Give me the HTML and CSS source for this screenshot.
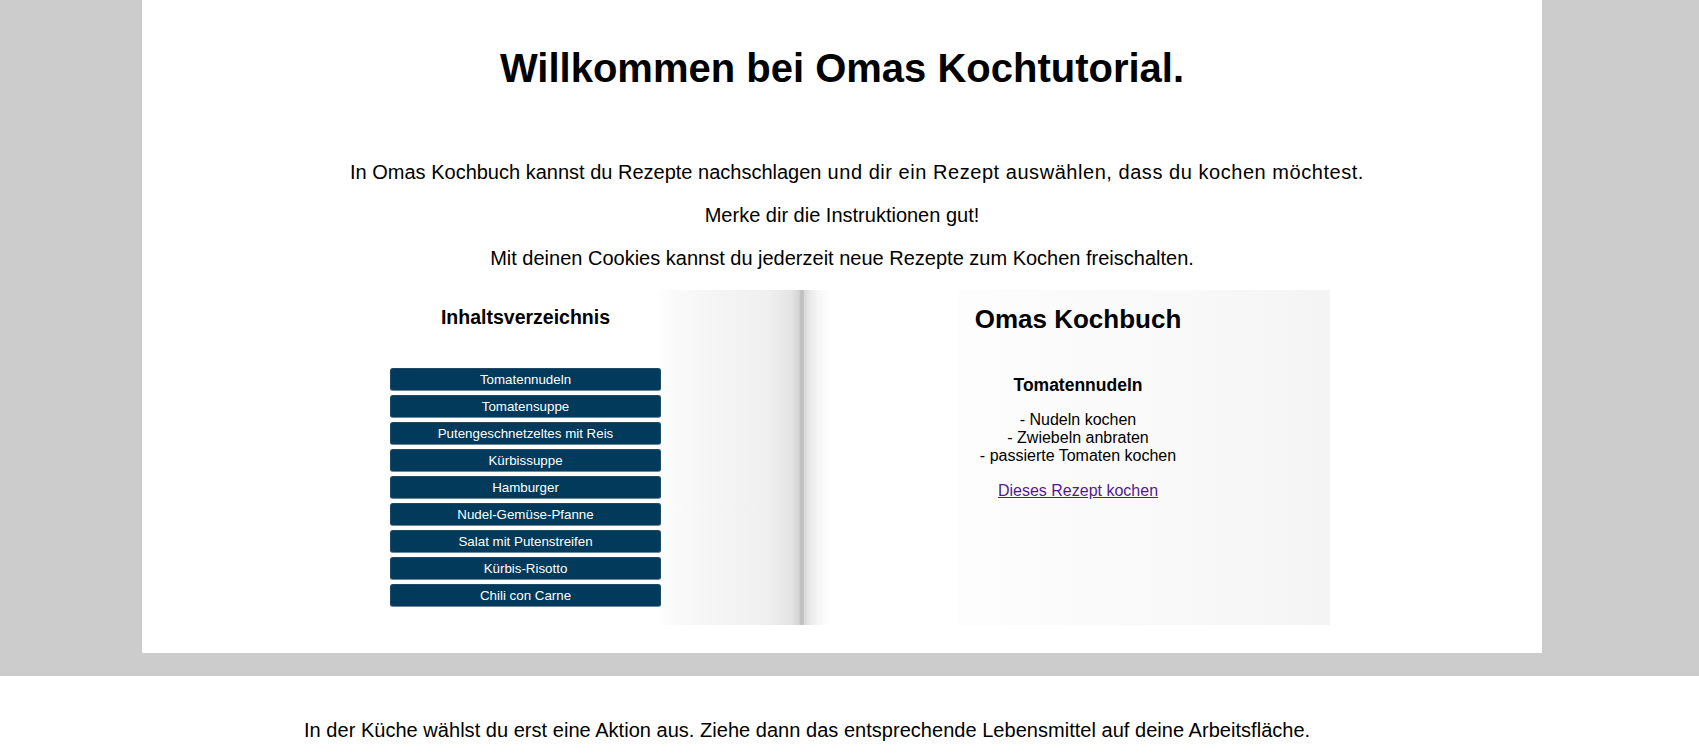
FILE: index.html
```html
<!DOCTYPE html>
<html lang="de">
<head>
<meta charset="utf-8">
<title>Omas Kochtutorial</title>
<link rel="stylesheet" href="styles.css">
</head>
<body>
<div class="band">
  <main class="sheet">
    <h1 class="title">Willkommen bei Omas Kochtutorial.</h1>
    <div class="intro">
      <p class="intro-first">In Omas Kochbuch kannst du Rezepte nachschlagen<span class="wide"> und dir ein Rezept auswählen, dass du kochen möchtest.</span></p>
      <p>Merke dir die Instruktionen gut!</p>
      <p>Mit deinen Cookies kannst du jederzeit neue Rezepte zum Kochen freischalten.</p>
    </div>
    <div class="book">
      <section class="page page-left">
        <div class="toc">
          <h3 class="toc-title">Inhaltsverzeichnis</h3>
          <div class="toc-list">
            <button class="recipe-btn">Tomatennudeln</button>
            <button class="recipe-btn">Tomatensuppe</button>
            <button class="recipe-btn">Putengeschnetzeltes mit Reis</button>
            <button class="recipe-btn">Kürbissuppe</button>
            <button class="recipe-btn">Hamburger</button>
            <button class="recipe-btn">Nudel-Gemüse-Pfanne</button>
            <button class="recipe-btn">Salat mit Putenstreifen</button>
            <button class="recipe-btn">Kürbis-Risotto</button>
            <button class="recipe-btn">Chili con Carne</button>
          </div>
        </div>
      </section>
      <section class="page page-right">
        <div class="recipe">
          <h2 class="book-title">Omas Kochbuch</h2>
          <h3 class="recipe-name">Tomatennudeln</h3>
          <div class="steps">- Nudeln kochen<br>- Zwiebeln anbraten<br>- passierte Tomaten kochen</div>
          <a class="cook-link" href="#">Dieses Rezept kochen</a>
        </div>
      </section>
    </div>
  </main>
</div>
<section class="kitchen">
  <p>In der Küche wählst du erst eine Aktion aus. Ziehe dann das entsprechende Lebensmittel auf deine Arbeitsfläche.</p>
</section>
</body>
</html>
```

FILE: styles.css
```css
html, body {
  margin: 0;
  padding: 0;
  background: #fff;
  font-family: "Liberation Sans", Arial, sans-serif;
  color: #000;
}

.band {
  background: #cccccc;
  padding: 0 15px 23px 0;
}

.sheet {
  width: 1400px;
  margin: 0 auto;
  background: #fff;
  text-align: center;
  padding: 45px 0 28px;
}

.title {
  margin: 0;
  font-size: 40px;
  line-height: 46px;
  font-weight: bold;
}

.intro {
  padding-top: 70px;
}

.intro p {
  margin: 0 0 20px;
  font-size: 20px;
  line-height: 23px;
}

.intro .intro-first {
  padding-left: 30px;
}

.wide {
  letter-spacing: 0.545px;
}

.book {
  width: 976px;
  height: 335px;
  margin: 0 auto;
  display: flex;
}

.page {
  height: 100%;
}

.page-left {
  width: 450px;
  background: linear-gradient(to right,
    #ffffff 0px,
    #ffffff 302px,
    #fafafa 320px,
    #f4f4f4 370px,
    #efefef 415px,
    #e4e4e4 437px,
    #d4d4d4 445px,
    #bdbdbd 447px,
    #c6c6c6 450px);
}

.toc {
  width: 271px;
  margin-left: 36px;
  padding-top: 16px;
}

.toc-title {
  margin: 0;
  font-size: 19.5px;
  line-height: 22px;
  font-weight: bold;
}

.toc-list {
  display: flex;
  flex-direction: column;
  gap: 4px;
  margin-top: 40px;
}

.recipe-btn {
  display: block;
  width: 100%;
  height: 23px;
  margin: 0;
  padding: 0 6px;
  background: #013a5a;
  color: #fff;
  border: 1px solid #1f4a66;
  border-bottom-color: #6f8698;
  border-radius: 3px;
  font-family: "Liberation Sans", Arial, sans-serif;
  font-size: 13.33px;
  line-height: 20px;
  text-align: center;
  cursor: pointer;
}

.page-right {
  width: 526px;
  background:
    linear-gradient(to right,
      #d8d8d8 0px,
      #e9e9e9 6px,
      #f6f6f6 14px,
      #ffffff 26px,
      rgba(255,255,255,0) 27px),
    linear-gradient(to right,
      #ffffff 0px,
      #ffffff 153px,
      #fdfdfd 154px,
      #fbfbfb 250px,
      #f8f8f8 400px,
      #f4f4f4 526px);
}

.recipe {
  padding: 14px 0 0 22px;
}

.book-title {
  margin: 0;
  font-size: 26px;
  line-height: 30px;
  font-weight: bold;
}

.recipe-name {
  margin: 41px 0 0;
  font-size: 17.5px;
  line-height: 20px;
  font-weight: bold;
}

.steps {
  margin-top: 16px;
  font-size: 16px;
  line-height: 18px;
}

.cook-link {
  display: inline-block;
  margin-top: 17px;
  font-size: 16px;
  line-height: 18px;
  color: #551a8b;
  text-decoration: underline;
}

.kitchen {
  padding: 43px 0 0 304px;
}

.kitchen p {
  margin: 0;
  font-size: 20px;
  line-height: 23px;
  letter-spacing: 0.03px;
}
```
